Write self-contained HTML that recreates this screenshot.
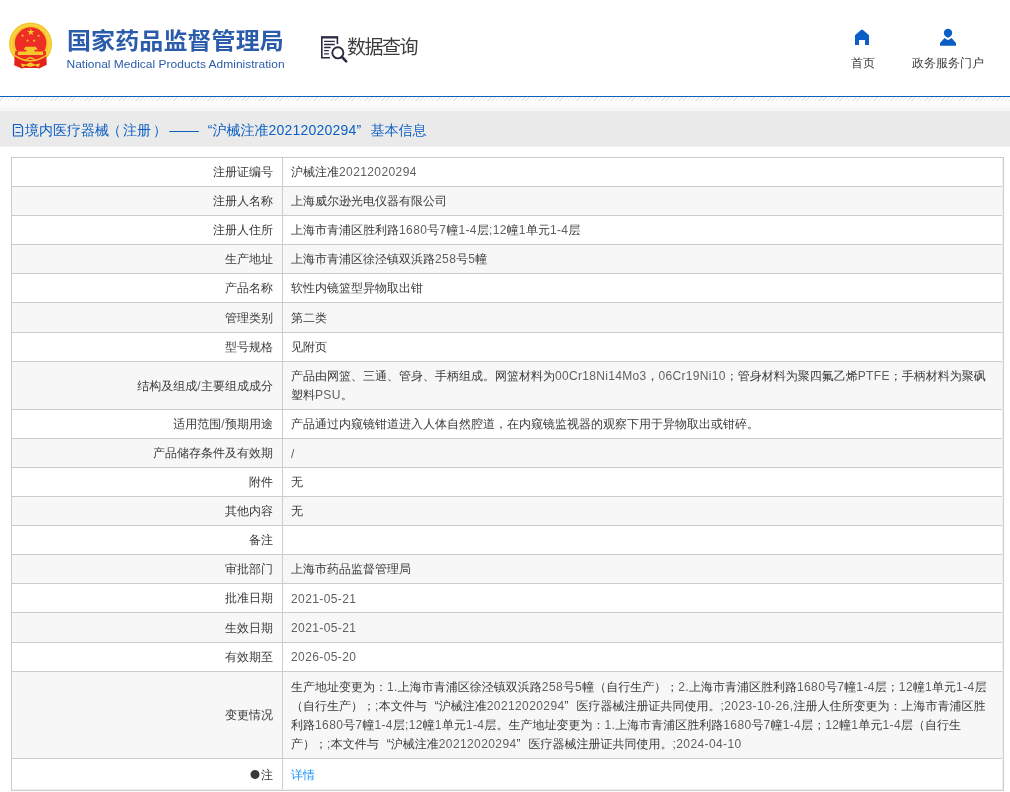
<!DOCTYPE html>
<html lang="zh-CN">
<head>
<meta charset="utf-8">
<title>国家药品监督管理局 数据查询</title>
<style>
html,body{margin:0;padding:0;background:#fff;}
body{width:1010px;height:792px;position:relative;overflow:hidden;font-family:"Liberation Sans","WenQuanYi Zen Hei","Noto Sans CJK SC",sans-serif;font-size:12px;color:#3a3a3a;}
.l{font-family:"Liberation Sans",sans-serif;letter-spacing:.4px;color:#606060;}
.q{display:inline-block;width:1em;font-family:"Liberation Sans",sans-serif;}
.qo{text-align:right;}
.qc{text-align:left;}
#hd{will-change:transform;position:absolute;left:0;top:0;width:1010px;height:96px;background:#fff;}
#blue{position:absolute;left:0;top:96px;width:1010px;height:1px;background:#0d5fc3;}
#hatch{position:absolute;left:0;top:97px;width:1010px;height:4px;background:repeating-linear-gradient(135deg,#fff 0,#fff 2px,#e6e6e6 2px,#e6e6e6 3px);}
#fade{position:absolute;left:0;top:101px;width:1010px;height:10px;background:linear-gradient(#fff,#f4f4f4);}
#band{will-change:transform;position:absolute;left:0;top:111px;width:1010px;height:35px;background:#eaeaea;border-bottom:1px solid #edf0f9;}
#band .tt{position:absolute;left:25px;top:11px;font-size:14px;line-height:16px;color:#0d5fc3;white-space:nowrap;}
#band .tt .l{letter-spacing:.22px;color:inherit;}
#band .dash{display:inline-block;width:30px;margin-left:3.500px;text-align:center;transform:scaleX(1.06);}
.pl{position:relative;left:-2px;}
.pr{position:relative;left:2px;}
.tbl{position:absolute;left:0;top:0;will-change:transform;}
.row{position:absolute;left:11px;width:993px;box-sizing:border-box;border:1px solid #ccc;background:#fff;}
.row.odd{background:#f7f7f7;}
.lab{position:absolute;left:0;top:0;bottom:0;width:270px;border-right:1px solid #ccc;display:flex;align-items:center;justify-content:flex-end;padding-right:9px;box-sizing:content-box;width:261px;}
.val{position:absolute;left:271px;top:0;bottom:0;right:0;display:flex;align-items:center;padding-left:8px;}
.t{white-space:nowrap;line-height:19.2px;display:block;position:relative;top:1px;}
.t.n2{line-height:19px;top:.400px;}
.t.lo{top:2px;}
.t.lo1{top:1px;}
.lk{color:#1890ff;}
#logo{position:absolute;left:8px;top:21px;}
#title{position:absolute;left:67px;top:23.700px;transform:scaleY(.93);transform-origin:0 6px;font-family:"Noto Sans CJK SC","WenQuanYi Zen Hei",sans-serif;font-weight:700;font-size:24px;line-height:32px;color:#2b5cab;white-space:nowrap;letter-spacing:.1px;}
#en{position:absolute;left:66.500px;top:55.600px;transform:scaleY(.95);transform-origin:0 12px;font-family:"Liberation Sans",sans-serif;font-size:12px;line-height:16px;color:#2b5cab;white-space:nowrap;}
#sjicon{position:absolute;left:318px;top:33px;}
#sj{position:absolute;left:347px;top:32px;font-family:"Noto Sans CJK SC",sans-serif;font-size:19px;line-height:28px;color:#3c3c3c;white-space:nowrap;letter-spacing:-1.5px;}
#homeicon{position:absolute;left:854px;top:29px;}
#home{position:absolute;left:851px;top:55px;line-height:16px;color:#3a3a3a;}
#usericon{position:absolute;left:939px;top:28px;}
#zw{position:absolute;left:912px;top:55px;line-height:16px;color:#3a3a3a;white-space:nowrap;}
#docicon{position:absolute;left:12px;top:13px;}
.vl{position:absolute;left:1002px;top:158px;width:1px;height:632px;background:#eef1f9;}
.hl{position:absolute;left:12px;top:789px;width:991px;height:1px;background:#eef1f9;}
.l7{letter-spacing:.32px;}
.c{font-family:"WenQuanYi Zen Hei","Noto Sans CJK SC",sans-serif;font-size:10px;display:inline-block;width:11px;text-align:left;vertical-align:.5px;line-height:12px;}
</style>
</head>
<body>
<div id="hd">
<svg id="logo" width="46" height="50" viewBox="0 0 46 50">
<circle cx="22.550" cy="22.900" r="21.500" fill="#f6c72d"/>
<circle cx="22.550" cy="22.900" r="19" fill="none" stroke="#f9d648" stroke-width="1.500"/>
<circle cx="22.600" cy="22.100" r="15.800" fill="#ee2e24"/>
<path d="M22.80 7.30 L23.68 9.99 L26.51 9.99 L24.22 11.66 L25.09 14.36 L22.80 12.69 L20.51 14.36 L21.38 11.66 L19.09 9.99 L21.92 9.99 Z M14.60 12.80 L14.98 13.97 L16.22 13.97 L15.22 14.70 L15.60 15.88 L14.60 15.15 L13.60 15.88 L13.98 14.70 L12.98 13.97 L14.22 13.97 Z M30.60 13.20 L30.98 14.37 L32.22 14.37 L31.22 15.10 L31.60 16.28 L30.60 15.55 L29.60 16.28 L29.98 15.10 L28.98 14.37 L30.22 14.37 Z M19.50 17.80 L19.88 18.97 L21.12 18.97 L20.12 19.70 L20.50 20.88 L19.50 20.15 L18.50 20.88 L18.88 19.70 L17.88 18.97 L19.12 18.97 Z M26.10 17.80 L26.48 18.97 L27.72 18.97 L26.72 19.70 L27.10 20.88 L26.10 20.15 L25.10 20.88 L25.48 19.70 L24.48 18.97 L25.72 18.97 Z" fill="#f6c72d"/>
<path d="M7.500 30 H37.700 L38.200 34.500 Q22.400 45.300 6.600 34.500 Z" fill="#ee2e24"/>
<path d="M17.300 25.800 H27.700 L29.700 28.800 H15.800 Z M18.500 28.800 H26.500 V30.500 H18.500 Z M9.900 30.400 H35.100 V34 H9.900 Z" fill="#f6c72d"/>
<path d="M6.600 34.800 Q22.400 45.500 38.200 34.800 L38.800 43.800 L31.200 47.500 L29.200 47 H15.800 L13.800 47.500 L6.200 44.300 Z" fill="#e5221b"/>
<path d="M6.400 34.300 Q22.400 45.300 38.400 34.300" fill="none" stroke="#f6c72d" stroke-width="1.500"/>
<path d="M17.300 40 Q22.400 33.500 27.500 40" fill="none" stroke="#f6c72d" stroke-width="1.500"/>
<path d="M12.800 42.600 L18 43.400 L22.400 41.200 L26.800 43.400 L32.100 42.600 L30.700 46.200 L27 44.600 L22.400 46 L17.800 44.600 L14.300 46.200 Z" fill="#f6c72d"/>
</svg>
<div id="title">国家药品监督管理局</div>
<div id="en">National Medical Products Administration</div>
<svg id="sjicon" width="32" height="32" viewBox="0 0 32 32">
<g fill="none" stroke="#2a2940">
<path d="M12 24.700 H3.800 V4.400 H19.400 V11.100" stroke-width="1.600"/>
<path d="M3 4.300 H20.100" stroke-width="2"/>
<path d="M6.100 8.400 H16.800 M6.100 11.500 H16.800 M6.100 14.500 H12.700 M6.100 17.700 H10.900 M6.100 20.900 H10.900" stroke-width="1.300"/>
<circle cx="19.850" cy="19.850" r="5.550" stroke-width="1.900"/>
<path d="M24 24 L28.200 28.300" stroke-width="2.600" stroke-linecap="round"/>
</g>
</svg>
<div id="sj">数据查询</div>
<svg id="homeicon" width="16" height="17" viewBox="0 0 16 17"><path d="M7.300 0.800 H8.700 L15 6.200 V15.900 H11 V11 H5 V15.900 H1 V6.200 Z" fill="#0b5ec6"/></svg>
<div id="home">首页</div>
<svg id="usericon" width="18" height="18" viewBox="0 0 18 18"><circle cx="9" cy="5" r="4.150" fill="#0b5ec6"/><path d="M8 8.500 H10 L9 10.200 Z" fill="#0b5ec6"/><path d="M5.500 9.900 L9 12.200 L12.600 9.900 L17 15 V17.800 H1 V15 Z" fill="#0b5ec6"/></svg>
<div id="zw">政务服务门户</div>
</div>
<div id="blue"></div><div id="hatch"></div><div id="fade"></div>
<div id="band"><svg id="docicon" width="12" height="14" viewBox="0 0 12 14"><path d="M1.500 0.500 H8 L10.500 3 V12 H1.500 Z M3.500 3.500 H8.500 M3.500 8.500 H8.500" fill="none" stroke="#0d5fc3" stroke-width="1.200"/></svg><div class="tt">境内医疗器械<span class="pl">（</span>注册<span class="pr">）</span><span class="dash">——</span><span class="q qo">“</span>沪械注准<span class="l">20212020294</span><span class="q qc">”</span>基本信息</div></div>
<div class="tbl">
<div class="row" style="top:157px;height:30px"><div class="lab"><span class="t">注册证编号</span></div><div class="val"><span class="t n1">沪械注准<span class="l">20212020294</span></span></div></div>
<div class="row odd" style="top:186px;height:30px"><div class="lab"><span class="t">注册人名称</span></div><div class="val"><span class="t n1">上海威尔逊光电仪器有限公司</span></div></div>
<div class="row" style="top:215px;height:30px"><div class="lab"><span class="t">注册人住所</span></div><div class="val"><span class="t n1">上海市青浦区胜利路<span class="l">1680</span>号<span class="l">7</span>幢<span class="l">1-4</span>层<span class="l">;12</span>幢<span class="l">1</span>单元<span class="l">1-4</span>层</span></div></div>
<div class="row odd" style="top:244px;height:30px"><div class="lab"><span class="t">生产地址</span></div><div class="val"><span class="t n1">上海市青浦区徐泾镇双浜路<span class="l">258</span>号<span class="l">5</span>幢</span></div></div>
<div class="row" style="top:273px;height:30px"><div class="lab"><span class="t">产品名称</span></div><div class="val"><span class="t n1">软性内镜篮型异物取出钳</span></div></div>
<div class="row odd" style="top:302px;height:31px"><div class="lab"><span class="t">管理类别</span></div><div class="val"><span class="t n1">第二类</span></div></div>
<div class="row" style="top:332px;height:30px"><div class="lab"><span class="t">型号规格</span></div><div class="val"><span class="t n1">见附页</span></div></div>
<div class="row odd" style="top:361px;height:49px"><div class="lab"><span class="t">结构及组成<span class="l">/</span>主要组成成分</span></div><div class="val"><span class="t n2">产品由网篮、三通、管身、手柄组成。网篮材料为<span class="l l7">00Cr18Ni14Mo3</span>，<span class="l l7">06Cr19Ni10</span>；管身材料为聚四氟乙烯<span class="l l7">PTFE</span>；手柄材料为聚砜<br>塑料<span class="l l7">PSU</span>。</span></div></div>
<div class="row" style="top:409px;height:30px"><div class="lab"><span class="t">适用范围<span class="l">/</span>预期用途</span></div><div class="val"><span class="t n1">产品通过内窥镜钳道进入人体自然腔道，在内窥镜监视器的观察下用于异物取出或钳碎。</span></div></div>
<div class="row odd" style="top:438px;height:30px"><div class="lab"><span class="t">产品储存条件及有效期</span></div><div class="val"><span class="t n1 lo"><span class="l">/</span></span></div></div>
<div class="row" style="top:467px;height:30px"><div class="lab"><span class="t">附件</span></div><div class="val"><span class="t n1">无</span></div></div>
<div class="row odd" style="top:496px;height:30px"><div class="lab"><span class="t">其他内容</span></div><div class="val"><span class="t n1">无</span></div></div>
<div class="row" style="top:525px;height:30px"><div class="lab"><span class="t">备注</span></div><div class="val"><span class="t n1"></span></div></div>
<div class="row odd" style="top:554px;height:30px"><div class="lab"><span class="t">审批部门</span></div><div class="val"><span class="t n1">上海市药品监督管理局</span></div></div>
<div class="row" style="top:583px;height:30px"><div class="lab"><span class="t">批准日期</span></div><div class="val"><span class="t n1 lo"><span class="l">2021-05-21</span></span></div></div>
<div class="row odd" style="top:612px;height:31px"><div class="lab"><span class="t">生效日期</span></div><div class="val"><span class="t n1 lo1"><span class="l">2021-05-21</span></span></div></div>
<div class="row" style="top:642px;height:30px"><div class="lab"><span class="t">有效期至</span></div><div class="val"><span class="t n1 lo1"><span class="l">2026-05-20</span></span></div></div>
<div class="row odd" style="top:671px;height:88px"><div class="lab"><span class="t">变更情况</span></div><div class="val"><span class="t n4">生产地址变更为：<span class="l">1.</span>上海市青浦区徐泾镇双浜路<span class="l">258</span>号<span class="l">5</span>幢（自行生产）；<span class="l">2.</span>上海市青浦区胜利路<span class="l">1680</span>号<span class="l">7</span>幢<span class="l">1-4</span>层；<span class="l">12</span>幢<span class="l">1</span>单元<span class="l">1-4</span>层<br>（自行生产）；<span class="l">;</span>本文件与<span class="q qo">“</span>沪械注准<span class="l">20212020294</span><span class="q qc">”</span>医疗器械注册证共同使用。<span class="l">;2023-10-26,</span>注册人住所变更为：上海市青浦区胜<br>利路<span class="l">1680</span>号<span class="l">7</span>幢<span class="l">1-4</span>层<span class="l">;12</span>幢<span class="l">1</span>单元<span class="l">1-4</span>层。生产地址变更为：<span class="l">1.</span>上海市青浦区胜利路<span class="l">1680</span>号<span class="l">7</span>幢<span class="l">1-4</span>层；<span class="l">12</span>幢<span class="l">1</span>单元<span class="l">1-4</span>层（自行生<br>产）；<span class="l">;</span>本文件与<span class="q qo">“</span>沪械注准<span class="l">20212020294</span><span class="q qc">”</span>医疗器械注册证共同使用。<span class="l">;2024-04-10</span></span></div></div>
<div class="row" style="top:758px;height:33px"><div class="lab"><span class="t"><span class="c">●</span>注</span></div><div class="val"><span class="t n1"><a class="lk">详情</a></span></div></div>
<div class="vl"></div><div class="hl"></div>
</div>
</body>
</html>
